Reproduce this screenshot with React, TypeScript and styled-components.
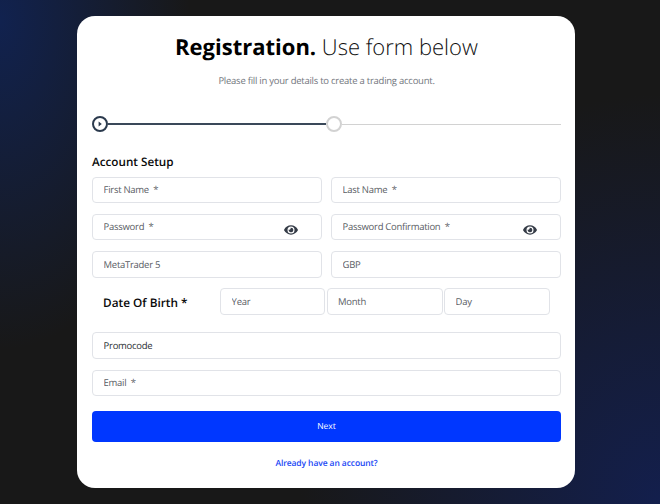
import React from "react";
import styled, { createGlobalStyle } from "styled-components";
import { FaEye } from "react-icons/fa";

const Global = createGlobalStyle`
  html, body { margin: 0; padding: 0; height: 100%; }
  body {
    font-family: "Open Sans", "Liberation Sans", sans-serif;
    overflow: hidden;
    text-rendering: geometricPrecision;
  }
  * { box-sizing: border-box; }
`;

const Page = styled.div`
  width: 660px;
  height: 504px;
  padding-top: 16px;
  background:
    radial-gradient(ellipse 190px 330px at 0px 20px, #11224f 0%, rgba(17, 34, 79, 0) 100%),
    radial-gradient(ellipse 360px 410px at 660px 504px, #131f4d 0%, rgba(19, 31, 77, 0) 100%),
    #181818;
`;

const Card = styled.main`
  width: 498px;
  height: 472px;
  margin-left: 77px;
  padding: 0 14px 0 15px;
  background: #fff;
  border-radius: 18px;
  display: flex;
  flex-direction: column;
`;

const Title = styled.h1`
  margin: 14px 0 0;
  font-size: 22px;
  line-height: 34px;
  font-weight: 300;
  color: #111;
  text-align: center;
`;

const Strong = styled.strong`
  font-weight: 700;
  color: #000;
`;

const Subtitle = styled.p`
  margin: 10px 0 0;
  font-size: 9.5px;
  letter-spacing: -0.25px;
  line-height: 14px;
  color: #73777e;
  text-align: center;
`;

const Stepper = styled.div`
  margin-top: 28px;
  display: flex;
  align-items: center;
  height: 16px;
`;

const StepDot = styled.div<{ $active?: boolean }>`
  flex: none;
  width: 16px;
  height: 16px;
  border-radius: 50%;
  background: #fff;
  border: 2px solid ${(p) => (p.$active ? "#2b3a4d" : "#d2d2d2")};
  display: flex;
  align-items: center;
  justify-content: center;
`;

const StepLine = styled.div<{ $active?: boolean; $w?: string }>`
  flex: ${(p) => p.$w ?? "1"};
  height: ${(p) => (p.$active ? "1.5px" : "1px")};
  background: ${(p) => (p.$active ? "#3a4859" : "#d2d2d2")};
`;

const Heading = styled.h2`
  margin: 21px 0 0;
  font-size: 11.7px;
  line-height: 18px;
  font-weight: 600;
  color: #0a0a0a;
`;

const Form = styled.form`
  margin-top: 6px;
  display: flex;
  flex-direction: column;
`;

const Row = styled.div<{ $mt?: number }>`
  display: flex;
  gap: 9px;
  margin-top: ${(p) => p.$mt ?? 11}px;
`;

const Field = styled.div`
  position: relative;
  flex: 1;
  min-width: 0;
`;

const Input = styled.input<{ $h?: number; $dark?: boolean }>`
  display: block;
  width: 100%;
  height: ${(p) => p.$h ?? 26}px;
  padding: 0 10.6px 1px;
  border: 1px solid #e1e3e8;
  border-radius: 4px;
  background: #fff;
  font-family: inherit;
  font-size: 9.5px;
  letter-spacing: -0.28px;
  text-rendering: geometricPrecision;
  outline: none;
  &::placeholder {
    color: ${(p) => (p.$dark ? "#2c2f34" : "#5a5d64")};
    opacity: 1;
  }
`;

const EyeButton = styled.span`
  position: absolute;
  right: 24px;
  top: 10px;
  width: 14px;
  height: 12px;
  color: #353c47;
  display: flex;
  align-items: center;
  justify-content: center;
  font-size: 14px;
`;

const BirthRow = styled.div`
  display: flex;
  margin-top: 10px;
`;

const BirthLabel = styled.div`
  width: 128px;
  padding-left: 11px;
  font-size: 11.8px;
  line-height: 31px;
  font-weight: 600;
  color: #0a0a0a;
`;

const BirthFields = styled.div`
  display: flex;
  gap: 1.5px;
`;

const BirthField = styled.div<{ $w: number }>`
  width: ${(p) => p.$w}px;
`;

const Submit = styled.button`
  margin-top: 15px;
  height: 31px;
  border: none;
  border-radius: 4px;
  background: #0037ff;
  color: #fff;
  font-family: inherit;
  font-size: 8.5px;
  font-weight: 500;
  text-rendering: geometricPrecision;
`;

const Login = styled.a`
  margin-top: 15px;
  font-size: 8.5px;
  letter-spacing: -0.1px;
  line-height: 13px;
  font-weight: 600;
  color: #1a47f5;
  text-align: center;
`;

const PlayIcon = () => (
  <svg width="6" height="6" viewBox="0 0 6 6" aria-hidden="true">
    <path d="M1.6 0.6 L4.8 3 L1.6 5.4 Z" fill="#2b3a4d" />
  </svg>
);

const req = (s: string) => `${s}\u00a0\u00a0*`;

export default function App() {
  return (
    <Page>
      <Global />
      <Card>
        <Title>
          <Strong>Registration.</Strong> Use form below
        </Title>
        <Subtitle>Please fill in your details to create a trading account.</Subtitle>
        <Stepper>
          <StepDot $active>
            <PlayIcon />
          </StepDot>
          <StepLine $active $w="0 0 218px" />
          <StepDot />
          <StepLine />
        </Stepper>
        <Heading>Account Setup</Heading>
        <Form>
          <Row $mt={0}>
            <Field><Input placeholder={req("First Name")} /></Field>
            <Field><Input placeholder={req("Last Name")} /></Field>
          </Row>
          <Row>
            <Field>
              <Input placeholder={req("Password")} />
              <EyeButton><FaEye /></EyeButton>
            </Field>
            <Field>
              <Input placeholder={req("Password Confirmation")} />
              <EyeButton><FaEye /></EyeButton>
            </Field>
          </Row>
          <Row>
            <Field><Input $h={27} placeholder="MetaTrader 5" /></Field>
            <Field><Input $h={27} placeholder="GBP" /></Field>
          </Row>
          <BirthRow>
            <BirthLabel>Date Of Birth&nbsp;*</BirthLabel>
            <BirthFields>
              <BirthField $w={105}><Input $h={27} placeholder="Year" /></BirthField>
              <BirthField $w={116}><Input $h={27} placeholder="Month" /></BirthField>
              <BirthField $w={106}><Input $h={27} placeholder="Day" /></BirthField>
            </BirthFields>
          </BirthRow>
          <Row $mt={13}>
            <Field><Input $h={27} $dark placeholder="Promocode" /></Field>
          </Row>
          <Row>
            <Field><Input placeholder={req("Email")} /></Field>
          </Row>
          <Submit type="button">Next</Submit>
        </Form>
        <Login>Already have an account?</Login>
      </Card>
    </Page>
  );
}
